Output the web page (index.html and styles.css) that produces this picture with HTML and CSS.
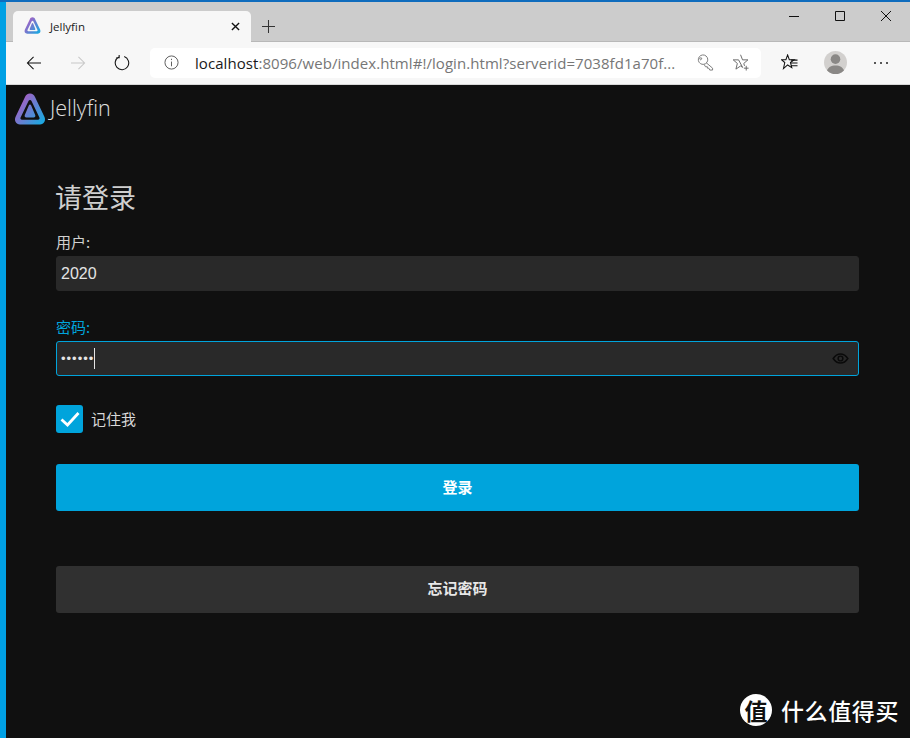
FILE: index.html
```html
<!DOCTYPE html>
<html lang="en">
<head>
<meta charset="UTF-8">
<meta name="viewport" content="width=device-width, initial-scale=1.0">
<title>Jellyfin</title>
<link rel="stylesheet" href="styles.css">
</head>
<body>

<svg class="defs" width="0" height="0">
    <defs>
        <linearGradient id="jf" gradientUnits="userSpaceOnUse" x1="4" y1="8" x2="29" y2="27">
            <stop offset="0" stop-color="#aa5cc3"/>
            <stop offset="1" stop-color="#1fa6e0"/>
        </linearGradient>
        <symbol id="jellyfin" viewBox="0 0 32 32">
            <path fill="url(#jf)" fill-rule="evenodd" d="M16 .5 C18.5 .5 20 2 21 4 L30.5 24 C32 27.5 30 31.5 26 31.5 H6 C2 31.5 0 27.5 1.5 24 L11 4 C12 2 13.5 .5 16 .5 Z M16 7 C15.3 7 14.8 7.5 14.5 8.1 L6.6 24.6 C6 25.8 6.8 26.8 8 26.8 H24 C25.2 26.8 26 25.8 25.4 24.6 L17.5 8.1 C17.2 7.5 16.7 7 16 7 Z"/>
            <path fill="url(#jf)" d="M16 11.5 C15.5 11.5 15 11.9 14.8 12.4 L10.8 22 C10.3 23.3 11 24.6 12.4 24.6 H19.6 C21 24.6 21.7 23.3 21.2 22 L17.2 12.4 C17 11.9 16.5 11.5 16 11.5 Z"/>
        </symbol>
    </defs>
</svg>

<div class="window">
    <!-- Tab strip -->
    <div class="tabstrip">
        <div class="tab">
            <svg class="tab-icon"><use href="#jellyfin"/></svg>
            <span class="tab-title">Jellyfin</span>
            <svg class="tab-close" viewBox="0 0 10 10"><path d="M1 1 L9 9 M9 1 L1 9"/></svg>
        </div>
        <svg class="new-tab" viewBox="0 0 14 14"><path d="M7 0 V14 M0 7 H14"/></svg>
        <div class="window-controls">
            <svg viewBox="0 0 10 10"><path d="M0 5.5 H10"/></svg>
            <svg viewBox="0 0 10 10"><path d="M.5 .5 H9.5 V9.5 H.5 Z"/></svg>
            <svg viewBox="0 0 10 10"><path d="M0 0 L10 10 M10 0 L0 10"/></svg>
        </div>
    </div>

    <!-- Toolbar -->
    <div class="toolbar">
        <svg class="tool back" viewBox="0 0 18 16"><path d="M17 8 H1.5 M8.5 1 L1.5 8 L8.5 15"/></svg>
        <svg class="tool forward" viewBox="0 0 18 16"><path d="M1 8 H16.5 M9.5 1 L16.5 8 L9.5 15"/></svg>
        <svg class="tool reload" viewBox="0 0 18 18"><path d="M5.5 2.2 A7.6 7.6 0 1 0 11.5 1.8 M5.8 0 V3 H2.6"/></svg>
        <div class="address">
            <svg class="info" viewBox="0 0 16 16">
                <circle cx="8" cy="8" r="7"/>
                <path d="M8 7 V12 M8 4 V5.4"/>
            </svg>
            <span class="url"><span class="host">localhost</span>:8096/web/index.html#!/login.html?serverid=7038fd1a70f...</span>
            <svg class="key" viewBox="0 0 18 18"><path d="M6 1 A5 5 0 1 1 1.5 7 A5 5 0 0 1 6 1 Z M9.5 9 L16.5 15 V17 H13.5 L12.5 15 H11 V13.5 H9 L7.5 11 M4 4 A1 1 0 1 1 3.9 4"/></svg>
            <svg class="fav" viewBox="0 0 18 18"><path d="M8 .8 L10.1 6.2 H15.8 L11.4 10 L12.2 12.6 M10.2 14.2 L8 12.7 L3.1 16 L4.6 10 L.2 6.2 H5.9 Z M14 12.5 V17.5 M11.5 15 H16.5"/></svg>
        </div>
        <svg class="collections" viewBox="0 0 18 18">
            <path d="M7 1 L8.8 6 H14 L10 9 L11.4 14.5 L7 11.6 L2.6 15.5 L4 9 L0.4 6 H5.2 Z"/>
            <path class="lines" d="M10.5 6.5 H17.5 M10.5 9.5 H17.5 M10.5 12.5 H17.5"/>
        </svg>
        <div class="avatar">
            <svg viewBox="0 0 24 24">
                <circle cx="12" cy="8.5" r="5" fill="#8a8886"/>
                <path d="M2 24 C3 16.5 8 15 12 15 C16 15 21 16.5 22 24 Z" fill="#8a8886"/>
            </svg>
        </div>
        <div class="more"><i></i><i></i><i></i></div>
    </div>

    <!-- Page -->
    <div class="page">
        <div class="brand">
            <svg class="brand-logo"><use href="#jellyfin"/></svg>
            <span class="brand-name">Jellyfin</span>
        </div>

        <form class="login">
            <h1>请登录</h1>
            <div class="field">
                <label>用户:</label>
                <div class="input">2020</div>
            </div>
            <div class="field active">
                <label>密码:</label>
                <div class="input">
                    <span class="dots">••••••</span><span class="caret"></span>
                    <svg class="eye" viewBox="0 0 18 12">
                        <path d="M1 6 C3.5 2.2 6 1 9 1 C12 1 14.5 2.2 17 6 C14.5 9.8 12 11 9 11 C6 11 3.5 9.8 1 6 Z"/>
                        <circle cx="9" cy="6" r="2.6"/>
                    </svg>
                </div>
            </div>
            <div class="remember">
                <span class="checkbox">
                    <svg viewBox="0 0 20 20"><path d="M1.5 10.5 L7.5 16 L18.5 4"/></svg>
                </span>
                <span class="remember-text">记住我</span>
            </div>
            <div class="btn btn-primary">登录</div>
            <div class="btn btn-secondary">忘记密码</div>
        </form>

        <!-- Watermark -->
        <div class="watermark">
            <span class="watermark-badge">值</span>
            <span>什么值得买</span>
        </div>
    </div>
</div>

</body>
</html>
```

FILE: styles.css
```css
:root {
    --accent: #00a4dc;
    --page-bg: #101010;
    --input-bg: #292929;
    --cjk: "Noto Sans CJK SC", sans-serif;
}
* { box-sizing: border-box; }
html, body { height: 100%; }
body {
    margin: 0;
    overflow: hidden;
    background: #00a0e4;
    border-top: 2px solid #0f6cbd;
    font-family: "Open Sans", "Noto Sans CJK SC", sans-serif;
}
.defs { position: absolute; }
.window {
    height: 736px;
    margin-left: 6px;
    display: flex;
    flex-direction: column;
}
.window svg { display: block; }

/* tab strip */
.tabstrip {
    height: 40px;
    flex: none;
    background: #cccccc;
    border-bottom: 1px solid #b8b8b8;
    display: flex;
    align-items: flex-end;
    padding-left: 7px;
}
.tab {
    width: 238px;
    height: 31px;
    margin-bottom: -1px;
    background: #f7f7f7;
    border-radius: 5px 5px 0 0;
    display: flex;
    align-items: center;
    padding: 0 11px 0 11px;
}
.tab-icon { width: 17px; height: 17px; margin-top: -2px; }
.tab-title {
    flex: 1;
    margin-left: 9px;
    font-size: 11.5px;
    color: #222;
    margin-top: -1px;
}
.tab-close { width: 9px; height: 9px; fill: none; stroke: #111; stroke-width: 1.5; }
.new-tab {
    width: 13px;
    height: 13px;
    margin: 0 0 8px 11px;
    fill: none;
    stroke: #333;
    stroke-width: 1.1;
}
.window-controls {
    margin-left: auto;
    align-self: flex-start;
    display: flex;
    gap: 36px;
    padding: 9px 19px 0 0;
}
.window-controls svg {
    width: 10px;
    height: 10px;
    fill: none;
    stroke: #111;
    stroke-width: 1;
}

/* toolbar */
.toolbar {
    height: 43px;
    flex: none;
    background: #f7f7f7;
    border-bottom: 1px solid #d8d8d8;
    display: flex;
    align-items: center;
    padding: 0 0 1px 20px;
}
.tool { fill: none; stroke-width: 1.2; flex: none; }
.back { width: 16px; height: 14px; stroke: #111; }
.forward { width: 16px; height: 14px; stroke: #c8c8c8; margin-left: 28px; }
.reload { width: 16px; height: 16px; stroke: #111; margin-left: 28px; }
.address {
    width: 611px;
    height: 30px;
    margin-left: 20px;
    background: #fff;
    border-radius: 5px;
    display: flex;
    align-items: center;
    padding: 0 11px 0 14px;
    flex: none;
}
.info { width: 15px; height: 15px; fill: none; stroke: #555; stroke-width: 1; flex: none; }
.url {
    flex: 1;
    margin-left: 16px;
    font-size: 15px;
    letter-spacing: 0.06px;
    color: #767676;
    white-space: nowrap;
    overflow: hidden;
}
.host { color: #1a1a1a; }
.key { width: 17px; height: 17px; fill: none; stroke: #777; stroke-width: 1; flex: none; margin-left: 10px; }
.fav { width: 17px; height: 17px; fill: none; stroke: #666; stroke-width: 1; flex: none; margin-left: 19px; }
.collections { width: 17px; height: 17px; fill: none; stroke: #111; stroke-width: 1.1; flex: none; margin-left: 20px; }
.lines { stroke-width: 1.2; }
.avatar {
    width: 23px;
    height: 23px;
    margin-left: 26px;
    border-radius: 50%;
    background: #d2d0ce;
    overflow: hidden;
    flex: none;
}
.more { display: flex; gap: 4px; margin-left: 27px; }
.more i { width: 2px; height: 2px; background: #222; border-radius: 50%; }

/* page */
.page {
    flex: 1;
    position: relative;
    background: var(--page-bg);
    color: #d0d0d0;
    font-family: var(--cjk);
    padding-right: 51px;
}
.brand {
    height: 48px;
    display: flex;
    align-items: center;
    padding: 0 0 0 8px;
}
.brand-logo { width: 32px; height: 32px; margin-top: -1px; }
.brand-name {
    margin-left: 4px;
    font-family: "Open Sans", sans-serif;
    font-weight: 300;
    font-size: 21.5px;
    color: #e0e0e0;
    margin-top: -3px;
}
.login { padding: 44px 0 0 50px; }
h1 {
    margin: 0 0 0 -1px;
    font-weight: 400;
    font-size: 27px;
    line-height: 39px;
    color: #cfcfcf;
}
.field { margin-top: 16px; }
.field + .field { margin-top: 26px; }
.field label {
    display: block;
    font-size: 15px;
    line-height: 20px;
    margin-bottom: 4px;
    color: #d0d0d0;
}
.input {
    height: 35px;
    background: var(--input-bg);
    border: 1px solid var(--input-bg);
    border-radius: 3px;
    padding-left: 4px;
    display: flex;
    align-items: center;
    font-family: "Liberation Sans", sans-serif;
    font-size: 16px;
    color: #e4e4e4;
}
.active label { color: var(--accent); }
.active .input { border-color: var(--accent); }
.dots { font-size: 13px; letter-spacing: 1px; }
.caret { width: 1px; height: 21px; background: #e4e4e4; margin-left: 0; }
.eye {
    width: 17px;
    height: 11px;
    margin-left: auto;
    margin-right: 9px;
    fill: none;
    stroke: #0a0a0a;
    stroke-width: 1.6;
}
.remember {
    margin-top: 29px;
    display: flex;
    align-items: center;
    gap: 8px;
    font-size: 15px;
    color: #d8d8d8;
}
.remember-text { margin-top: -2px; }
.checkbox {
    width: 27px;
    height: 28px;
    background: var(--accent);
    border-radius: 3px;
    display: flex;
    align-items: center;
    justify-content: center;
}
.checkbox svg { width: 20px; height: 20px; fill: none; stroke: #fff; stroke-width: 2.8; }
.btn {
    height: 47px;
    border-radius: 3px;
    display: flex;
    align-items: center;
    justify-content: center;
    padding-bottom: 2px;
    font-size: 15px;
    font-weight: 700;
    color: #fff;
}
.btn-primary { margin-top: 31px; background: var(--accent); }
.btn-secondary { margin-top: 55px; padding-bottom: 4px; background: #303030; color: #e8e8e8; }

/* watermark sits over the page corner */
.watermark {
    position: absolute;
    left: 734px;
    top: 608px;
    display: flex;
    align-items: center;
    gap: 9px;
    font-size: 23px;
    font-weight: 500;
    letter-spacing: 0.6px;
    color: #fff;
    white-space: nowrap;
}
.watermark-badge {
    width: 32px;
    height: 32px;
    border-radius: 50%;
    background: #fff;
    color: #101010;
    font-size: 23px;
    font-weight: 700;
    line-height: 32px;
    text-align: center;
    letter-spacing: 0;
}
```
